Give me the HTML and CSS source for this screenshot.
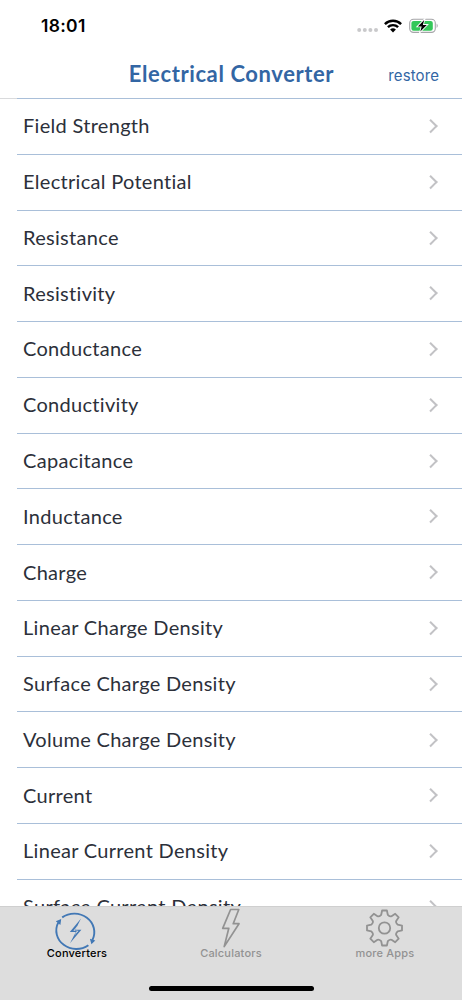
FILE: index.html
```html
<!DOCTYPE html>
<html lang="en">
<head>
    <meta charset="UTF-8">
    <meta name="viewport" content="width=device-width, initial-scale=1.0">
    <title>Electrical Converter</title>
    <link rel="stylesheet" href="styles.css">
</head>
<body>
    <div class="app">
        <div class="status-bar">
            <div class="time">18:01</div>
            <div class="status-icons">
                <svg class="dots" width="22" height="6" viewBox="0 0 22 6" fill="#c9c9cb">
                    <circle cx="2.2" cy="3" r="2"/><circle cx="7.8" cy="3" r="2"/><circle cx="13.4" cy="3" r="2"/><circle cx="19" cy="3" r="2"/>
                </svg>
                <svg class="wifi" width="18" height="14" viewBox="0 0 18 14">
                    <path d="M.9 5.1a11.4 11.4 0 0 1 16.2 0M3.9 8.2a7.2 7.2 0 0 1 10.2 0" fill="none" stroke="#000" stroke-width="2.4"/>
                    <path d="M6.1 10.6a4.4 4.4 0 0 1 5.8 0L9 13.5z"/>
                </svg>
                <svg class="battery" width="30" height="16" viewBox="0 0 30 16">
                    <rect x=".7" y="1.2" width="25.6" height="13.2" rx="3.8" fill="none" stroke="#a5a5a8" stroke-width="1.1"/>
                    <path d="M27.6 5.6v4.4c1.5-.7 1.5-3.7 0-4.4z" fill="#a5a5a8"/>
                    <rect x="2.4" y="2.9" width="21.4" height="9.8" rx="2.2" fill="#34c759"/>
                    <path d="M15.2 2L8.9 8.4h3.8l-1.4 5.2 6.5-6.6h-3.9z" stroke="#fff" stroke-width="1.8" paint-order="stroke"/>
                </svg>
            </div>
        </div>
        <div class="header">
            <div class="title">Electrical Converter</div>
            <a class="restore">restore</a>
        </div>
        <div class="list">
            <div class="row"><span>Field Strength</span><i class="chevron"></i></div>
            <div class="row"><span>Electrical Potential</span><i class="chevron"></i></div>
            <div class="row"><span>Resistance</span><i class="chevron"></i></div>
            <div class="row"><span>Resistivity</span><i class="chevron"></i></div>
            <div class="row"><span>Conductance</span><i class="chevron"></i></div>
            <div class="row"><span>Conductivity</span><i class="chevron"></i></div>
            <div class="row"><span>Capacitance</span><i class="chevron"></i></div>
            <div class="row"><span>Inductance</span><i class="chevron"></i></div>
            <div class="row"><span>Charge</span><i class="chevron"></i></div>
            <div class="row"><span>Linear Charge Density</span><i class="chevron"></i></div>
            <div class="row"><span>Surface Charge Density</span><i class="chevron"></i></div>
            <div class="row"><span>Volume Charge Density</span><i class="chevron"></i></div>
            <div class="row"><span>Current</span><i class="chevron"></i></div>
            <div class="row"><span>Linear Current Density</span><i class="chevron"></i></div>
            <div class="row"><span>Surface Current Density</span><i class="chevron"></i></div>
        </div>
        <div class="tab-bar">
            <div class="tabs">
                <div class="tab active">
                    <svg class="tab-icon" width="46" height="42" viewBox="0 0 46 42">
                        <g fill="none" stroke="#4278b5" stroke-width="1.9">
                            <path d="M8.2 10.4A20 18.5 0 0 1 38.4 33"/>
                            <path d="M34.4 38.2A20 18.5 0 0 1 4.2 15.6"/>
                        </g>
                        <path d="M1.8 14.3l5.4-2.4-.8 6zM35.9 31.8l5.4 1.8-3.9 3.6z" fill="#4278b5"/>
                        <path d="M27 11.6L15.8 25h6L16 36.2 27.4 22.7h-6zM19.4 23.7l4.4-5.4-3.1 5.1 3.8.3-4.2 5 2.5-4.8z" fill="#4278b5" fill-rule="evenodd"/>
                    </svg>
                    <span>Converters</span>
                </div>
                <div class="tab">
                    <svg class="tab-icon" width="46" height="42" viewBox="0 0 46 42">
                        <path d="M22.6 2.5H30.8l-5.6 14.2h5.8L16.2 39.6l4.6-18.3h-6.1z" fill="none" stroke="#929292" stroke-width="1.7" stroke-linejoin="round"/>
                    </svg>
                    <span>Calculators</span>
                </div>
                <div class="tab">
                    <svg class="tab-icon" width="46" height="42" viewBox="-22.5 -21 46 42">
                        <g fill="none" stroke="#929292" stroke-width="1.8" stroke-linejoin="round">
                            <path d="M-2.4-17.5H2.4L3.3-13.2Q5.5-11 7-11.7L10.7-14.2 14.2-10.7 11.7-7Q11-5.5 13.2-3.3L17.5-2.4V2.4L13.2 3.3Q11 5.5 11.7 7L14.2 10.7 10.7 14.2 7 11.7Q5.5 11 3.3 13.2L2.4 17.5H-2.4L-3.3 13.2Q-5.5 11-7 11.7L-10.7 14.2-14.2 10.7-11.7 7Q-11 5.5-13.2 3.3L-17.5 2.4V-2.4L-13.2-3.3Q-11-5.5-11.7-7L-14.2-10.7-10.7-14.2-7-11.7Q-5.5-11-3.3-13.2z"/>
                            <circle r="5.7"/>
                        </g>
                    </svg>
                    <span>more Apps</span>
                </div>
            </div>
            <div class="home-indicator"></div>
        </div>
    </div>
</body>
</html>
```
FILE: styles.css
```css
body, html {
    margin: 0;
    padding: 0;
    height: 100%;
    font-family: Lato, sans-serif;
    background-color: #fff;
}
.app {
    display: flex;
    flex-direction: column;
    width: 462px;
    height: 1000px;
    overflow: hidden;
}
.status-bar {
    flex: none;
    display: flex;
    align-items: center;
    justify-content: space-between;
    box-sizing: border-box;
    height: 51px;
    padding: 0 23px 0 41px;
}
.time {
    font-family: Inter, sans-serif;
    font-size: 17.5px;
    font-weight: 600;
    letter-spacing: 0.3px;
    color: #000;
}
.status-icons {
    display: flex;
    align-items: center;
}
.dots {
    margin: 9px 5px 0 0;
}
.wifi {
    margin-right: 7px;
}
.header {
    flex: none;
    display: grid;
    grid-template-columns: 1fr auto 1fr;
    align-items: center;
    height: 47px;
    padding: 0 23px 0 24px;
    border-bottom: 1px solid #d9dadc;
    color: #3366a4;
}
.title {
    grid-column: 2;
    font-size: 22px;
    font-weight: 700;
    letter-spacing: 0.6px;
    line-height: 43px;
    padding-bottom: 2px;
}
.restore {
    justify-self: end;
    padding-top: 2px;
    font-family: Inter, sans-serif;
    font-size: 15px;
    letter-spacing: 0.1px;
}
.list {
    flex: 1;
    min-height: 0;
    margin: -1px 0 0 17px;
    border-top: 1px solid #a9bfd9;
    overflow: hidden;
}
.row {
    display: flex;
    align-items: center;
    justify-content: space-between;
    box-sizing: border-box;
    height: 55.77px;
    padding: 0 27px 0 6px;
    border-bottom: 1px solid #a9bfd9;
    font-size: 20px;
    letter-spacing: 0.3px;
    color: #2c303a;
}
.row span {
    padding-bottom: 2px;
}
.chevron {
    width: 7.5px;
    height: 7.5px;
    margin-bottom: 1px;
    border: solid #c2c2c5;
    border-width: 2px 2px 0 0;
    transform: rotate(45deg);
}
.tab-bar {
    flex: none;
    display: flex;
    flex-direction: column;
    align-items: center;
    justify-content: space-between;
    box-sizing: border-box;
    height: 94px;
    padding-bottom: 9px;
    border-top: 1px solid #cfcfcf;
    background-color: #dddddd;
}
.tabs {
    display: flex;
    width: 100%;
}
.tab {
    flex: 1;
    display: flex;
    flex-direction: column;
    align-items: center;
    font-family: Inter, sans-serif;
    font-size: 11px;
    font-weight: 500;
    line-height: 14px;
    letter-spacing: 0.2px;
    color: #929292;
}
.tab span {
    margin-top: -3px;
}
.active {
    color: #000;
}
.tab-icon {
    display: block;
    overflow: visible;
}
.home-indicator {
    width: 165px;
    height: 5px;
    border-radius: 3px;
    background-color: #000;
}
```
